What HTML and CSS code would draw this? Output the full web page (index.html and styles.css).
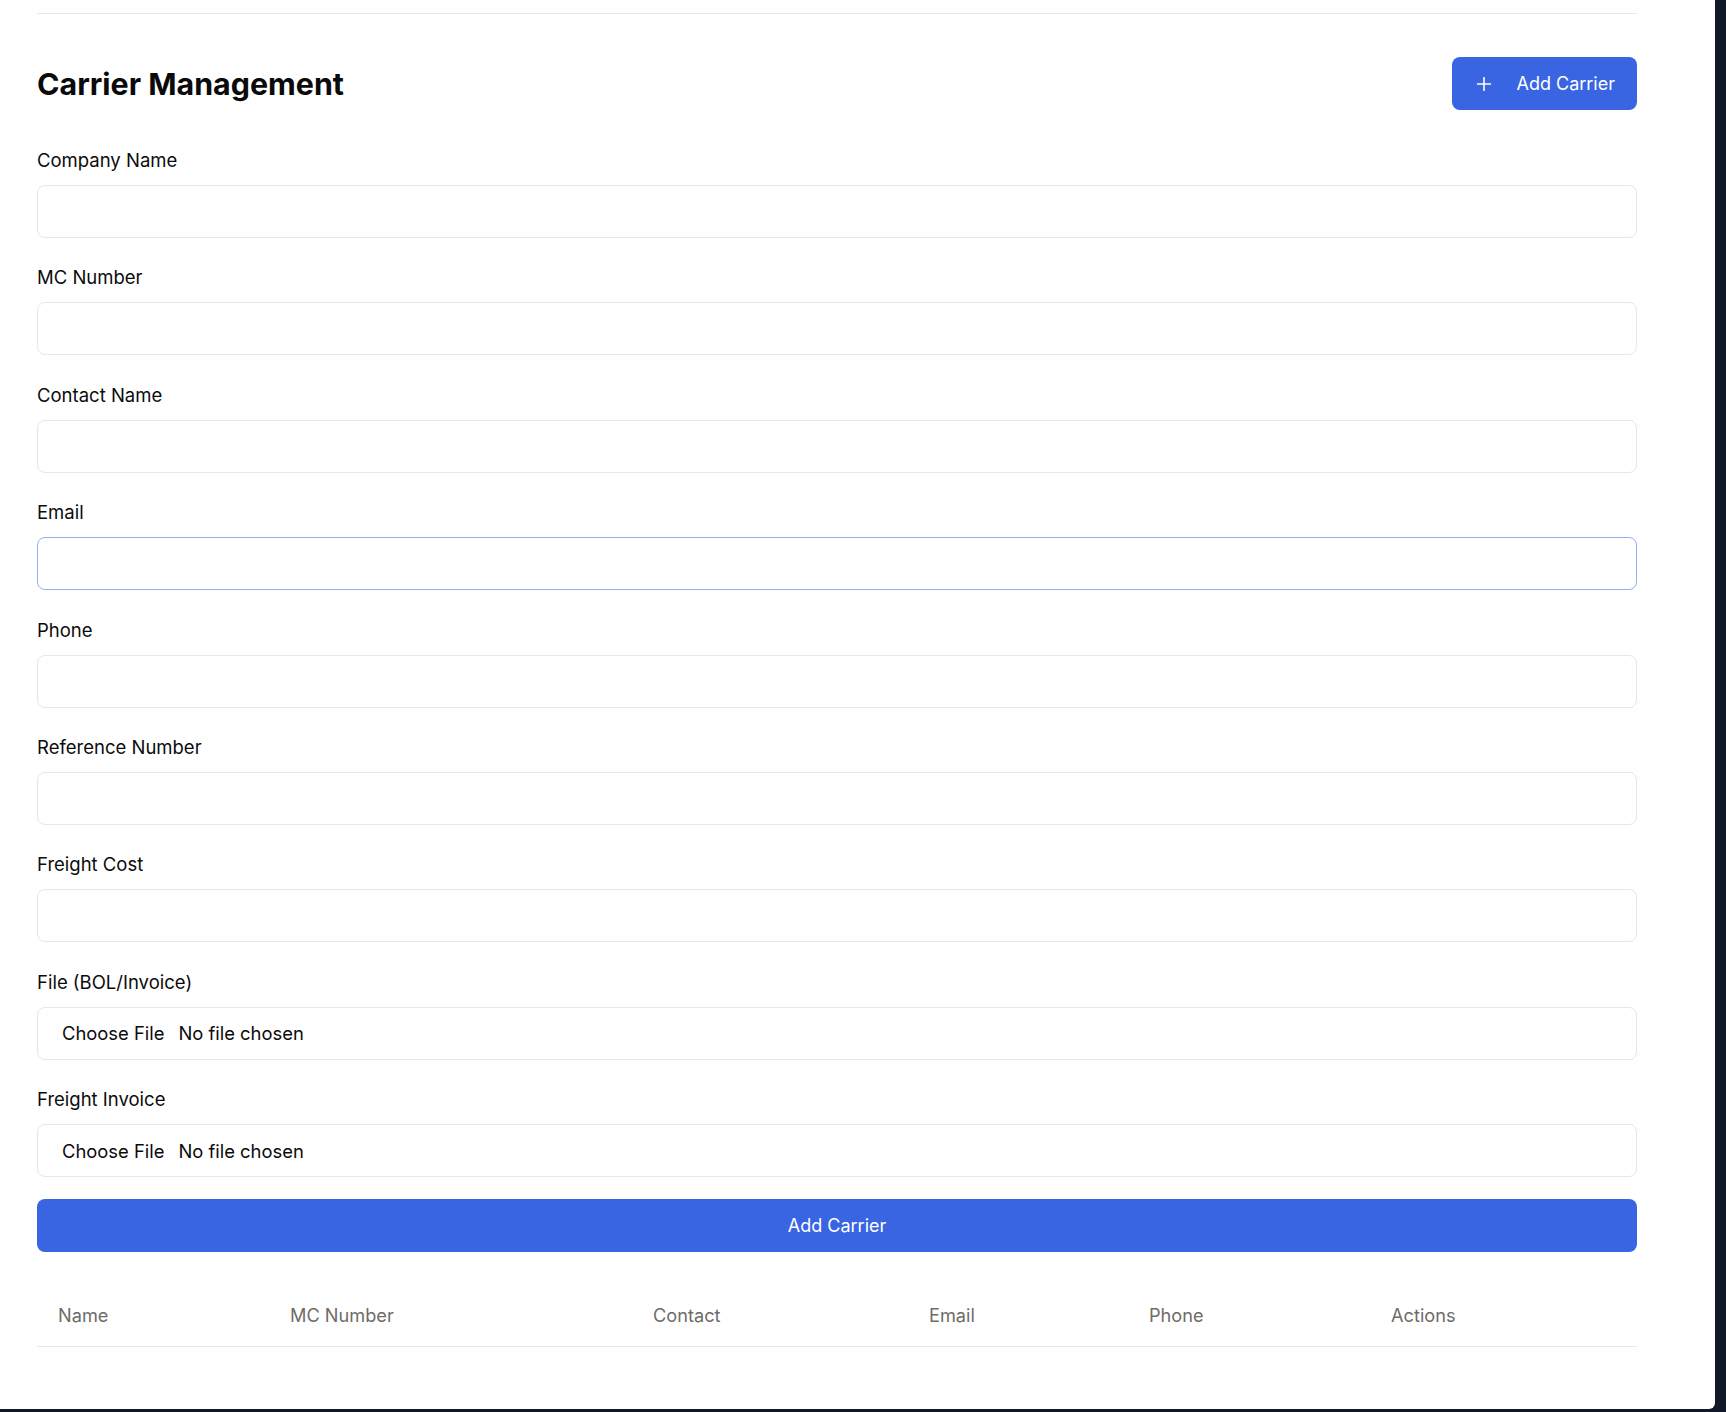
FILE: index.html
```html
<!DOCTYPE html>
<html lang="en">
<head>
<meta charset="utf-8">
<title>Carrier Management</title>
<link rel="stylesheet" href="styles.css">
</head>
<body>
<div class="panel">
  <div class="content">
    <div class="top-rule"></div>
    <div class="header">
      <h1 class="title">Carrier Management</h1>
      <button class="btn-add" type="button">
        <svg class="plus" width="14" height="14" viewBox="0 0 14 14" aria-hidden="true"><path d="M7 0.5V13.5M0.5 7H13.5" stroke="#fff" stroke-width="1.6" fill="none" stroke-linecap="round"/></svg>
        <span>Add Carrier</span>
      </button>
    </div>
    <form class="form">
      <div class="field">
        <label class="label">Company Name</label>
        <input class="input" type="text">
      </div>
      <div class="field">
        <label class="label">MC Number</label>
        <input class="input" type="text">
      </div>
      <div class="field">
        <label class="label">Contact Name</label>
        <input class="input" type="text">
      </div>
      <div class="field">
        <label class="label">Email</label>
        <input class="input input-focus" type="email">
      </div>
      <div class="field">
        <label class="label">Phone</label>
        <input class="input" type="text">
      </div>
      <div class="field">
        <label class="label">Reference Number</label>
        <input class="input" type="text">
      </div>
      <div class="field">
        <label class="label">Freight Cost</label>
        <input class="input" type="text">
      </div>
      <div class="field">
        <label class="label">File (BOL/Invoice)</label>
        <div class="input file-box"><span class="file-btn">Choose File</span><span class="file-name">No file chosen</span></div>
      </div>
      <div class="field">
        <label class="label">Freight Invoice</label>
        <div class="input file-box"><span class="file-btn">Choose File</span><span class="file-name">No file chosen</span></div>
      </div>
      <button class="btn-submit" type="button">Add Carrier</button>
    </form>
    <table class="table">
      <colgroup>
        <col class="c1"><col class="c2"><col class="c3"><col class="c4"><col class="c5"><col class="c6">
      </colgroup>
      <thead>
        <tr>
          <th>Name</th>
          <th>MC Number</th>
          <th>Contact</th>
          <th>Email</th>
          <th>Phone</th>
          <th>Actions</th>
        </tr>
      </thead>
      <tbody></tbody>
    </table>
  </div>
</div>
</body>
</html>
```

FILE: styles.css
```css
html, body {
  margin: 0;
  padding: 0;
  height: 100%;
}

body {
  background: #111827;
  font-family: Inter, "Noto Sans", "Liberation Sans", sans-serif;
  color: #0b0b0c;
  overflow: hidden;
}

.panel {
  width: 1715px;
  height: 1409px;
  background: #ffffff;
  border-bottom-right-radius: 6px;
  overflow: hidden;
  box-sizing: border-box;
  padding: 0 78px 0 37px;
}

.content {
  width: 1600px;
}

.top-rule {
  margin-top: 13px;
  height: 1px;
  background: #e5e7eb;
}

.header {
  display: flex;
  align-items: center;
  justify-content: space-between;
  margin-top: 43px;
  height: 53px;
}

.title {
  margin: 0;
  font-size: 30.4px;
  line-height: 36px;
  font-weight: 700;
  letter-spacing: 0;
  color: #0a0a0a;
}

.btn-add {
  display: flex;
  align-items: center;
  height: 53px;
  padding: 0 22px 0 25px;
  background: #3964e2;
  color: #ffffff;
  border: none;
  border-radius: 8px;
  font-family: inherit;
  font-size: 18px;
  line-height: 24px;
}

.plus {
  margin-right: 25px;
}

.form {
  display: flex;
  flex-direction: column;
  gap: 27.4px;
  margin-top: 38px;
}

.field {
  display: flex;
  flex-direction: column;
}

.label {
  font-size: 18.5px;
  line-height: 24px;
  margin-bottom: 13px;
  color: #0b0b0c;
}

.input {
  box-sizing: border-box;
  height: 53px;
  width: 100%;
  border: 1px solid #e5e7eb;
  border-radius: 8px;
  background: #fff;
  font-family: inherit;
  font-size: 18px;
  padding: 0 16px;
  outline: none;
}

.input-focus {
  border-color: #8fb0f3;
}

.file-box {
  display: flex;
  align-items: center;
  padding: 0 0 0 24px;
  font-size: 18.4px;
  color: #0b0b0c;
}

.file-btn {
  margin-right: 14px;
}

.btn-submit {
  margin-top: -5.4px;
  height: 53px;
  width: 100%;
  background: #3964e2;
  color: #ffffff;
  border: none;
  border-radius: 8px;
  font-family: inherit;
  font-size: 18px;
}

.table {
  margin-top: 31px;
  width: 1600px;
  border-collapse: collapse;
  table-layout: fixed;
}

.c1 { width: 232px; }
.c2 { width: 363px; }
.c3 { width: 276px; }
.c4 { width: 220px; }
.c5 { width: 242px; }
.c6 { width: 267px; }

.table thead tr {
  border-bottom: 1px solid #e5e7eb;
}

.table th {
  text-align: left;
  font-weight: 400;
  font-size: 18.2px;
  line-height: 24px;
  color: #6f6b68;
  padding: 20px 21px 19px 21px;
}
```
